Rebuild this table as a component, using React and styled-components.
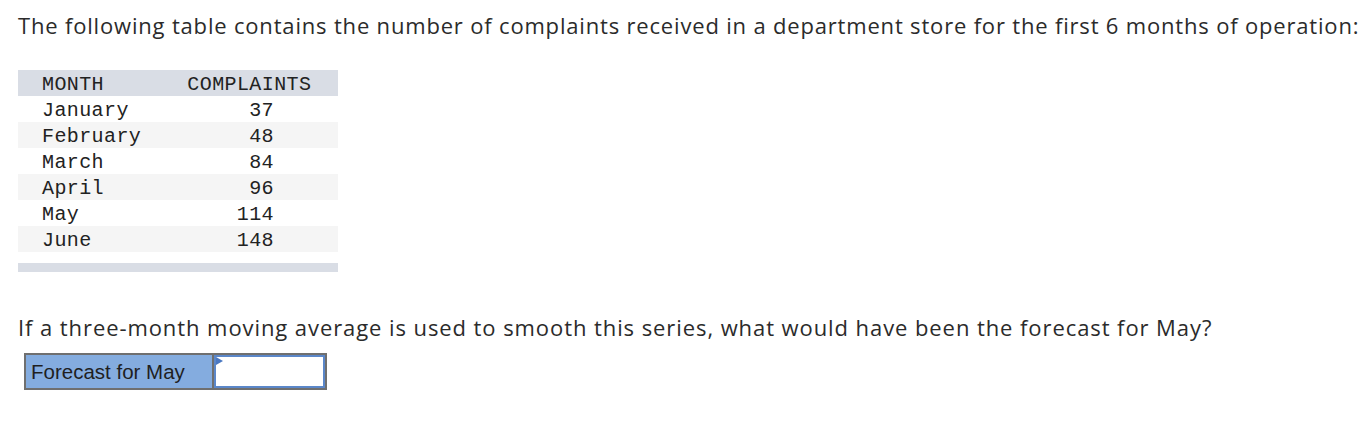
import React from 'react';
import styled, { createGlobalStyle } from 'styled-components';

const GlobalStyle = createGlobalStyle`
    body {
        margin: 0;
        background: #ffffff;
    }
`;

const Page = styled.div`
    padding: 10px 0 0 18px;
    font-family: "Open Sans", "Liberation Sans", sans-serif;
    color: #2b2b2b;
`;

const Prompt = styled.p`
    margin: 0;
    font-size: 22px;
    line-height: 30px;
    letter-spacing: 0.82px;
    white-space: nowrap;
`;

const DataTable = styled.table`
    margin-top: 30px;
    width: 320px;
    border-collapse: collapse;
    font-family: "Liberation Mono", "Courier New", monospace;
    font-size: 20px;
    letter-spacing: 0.4px;
    color: #222;

    td, th {
        height: 26px;
        padding: 2px 0 0 0;
        box-sizing: border-box;
        font-weight: normal;
        vertical-align: middle;
    }
`;

const HeadRow = styled.tr`
    background: #d9dde5;
`;

const BodyRow = styled.tr`
    background: ${(p) => (p.$shaded ? '#f5f5f5' : '#ffffff')};
`;

const MonthCell = styled.td`
    text-align: left;
    padding-left: 24px !important;
`;

const CountCell = styled.td`
    text-align: right;
    padding-right: 64px !important;
`;

const HeadMonth = styled.th`
    text-align: left;
    padding-left: 24px !important;
`;

const HeadCount = styled.th`
    text-align: left;
    padding-left: 24px !important;
`;

const FootBar = styled.div`
    width: 320px;
    height: 9px;
    margin-top: 11px;
    background: #d9dde5;
`;

const Question = styled(Prompt)`
    margin-top: 40px;
    letter-spacing: 0.92px;
`;

const AnswerBox = styled.div`
    display: flex;
    margin: 11px 0 0 6px;
    width: 299px;
    height: 33px;
    border: 2px solid #6f6f6f;
`;

const AnswerLabel = styled.div`
    width: 186px;
    background: #84acdf;
    font-family: "Liberation Sans", Arial, sans-serif;
    font-size: 20.5px;
    color: #1f1f1f;
    display: flex;
    align-items: center;
    padding-left: 5px;
    box-sizing: border-box;
`;

const AnswerInput = styled.div`
    position: relative;
    flex: 1;
    border-left: 2px solid #6f6f6f;
    background: #ffffff;
    box-shadow: inset 0 0 0 2px #5b87c9;
`;

const Marker = styled.span`
    position: absolute;
    top: 2px;
    left: 2px;
    width: 0;
    height: 0;
    border-top: 4px solid transparent;
    border-bottom: 4px solid transparent;
    border-left: 7px solid #4a78c2;
`;

const rows = [
    ['January', 37],
    ['February', 48],
    ['March', 84],
    ['April', 96],
    ['May', 114],
    ['June', 148],
];

const App = () => (
    <Page>
        <GlobalStyle />
        <Prompt>
            The following table contains the number of complaints received in a department store for the first 6 months of operation:
        </Prompt>
        <DataTable>
            <thead>
                <HeadRow>
                    <HeadMonth>MONTH</HeadMonth>
                    <HeadCount>COMPLAINTS</HeadCount>
                </HeadRow>
            </thead>
            <tbody>
                {rows.map(([month, count], i) => (
                    <BodyRow key={month} $shaded={i % 2 === 1}>
                        <MonthCell>{month}</MonthCell>
                        <CountCell>{count}</CountCell>
                    </BodyRow>
                ))}
            </tbody>
        </DataTable>
        <FootBar />
        <Question>
            If a three-month moving average is used to smooth this series, what would have been the forecast for May?
        </Question>
        <AnswerBox>
            <AnswerLabel>Forecast for May</AnswerLabel>
            <AnswerInput>
                <Marker />
            </AnswerInput>
        </AnswerBox>
    </Page>
);

export default App;
